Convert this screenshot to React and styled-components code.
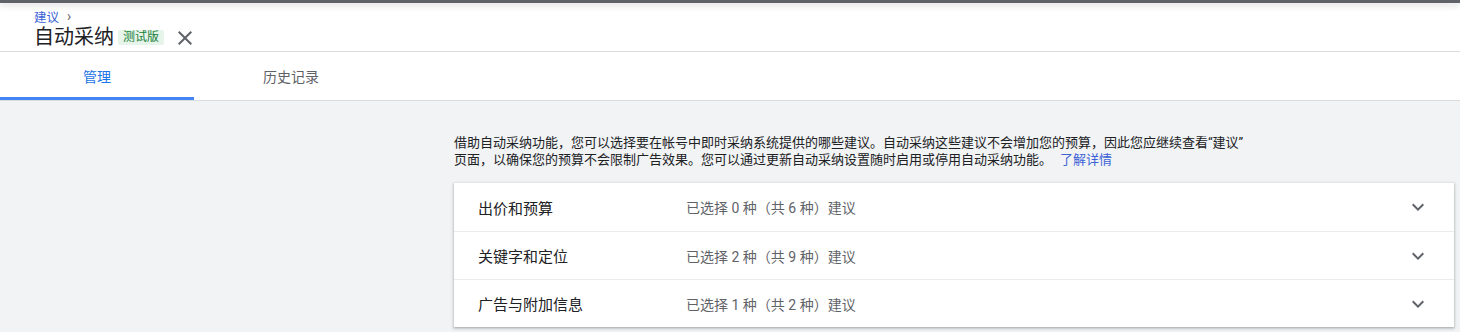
import React from "react";
import styled, { createGlobalStyle } from "styled-components";

const GlobalStyle = createGlobalStyle`
  html, body {
    margin: 0;
    padding: 0;
    background: #f1f3f4;
    font-family: Roboto, "Noto Sans CJK SC", sans-serif;
    color: #202124;
  }
`;

const groups = [
  { name: "出价和预算", selected: 0, total: 6 },
  { name: "关键字和定位", selected: 2, total: 9 },
  { name: "广告与附加信息", selected: 1, total: 2 },
];

const CloseIcon = () => (
  <svg width="24" height="24" viewBox="0 0 24 24" fill="currentColor">
    <path d="M19 6.41L17.59 5 12 10.59 6.41 5 5 6.41 10.59 12 5 17.59 6.41 19 12 13.41 17.59 19 19 17.59 13.41 12z" />
  </svg>
);

const ExpandIcon = () => (
  <svg width="24" height="24" viewBox="0 0 24 24" fill="currentColor">
    <path d="M16.59 8.59L12 13.17 7.41 8.59 6 10l6 6 6-6z" />
  </svg>
);

const App = () => {
  return (
    <Page>
      <GlobalStyle />
      <Header>
        <TopBar />
        <HeaderBody>
          <Crumb>
            <CrumbLink>建议</CrumbLink>
            <CrumbArrow>›</CrumbArrow>
          </Crumb>
          <TitleRow>
            <Title>自动采纳</Title>
            <Badge>测试版</Badge>
            <CloseButton>
              <CloseIcon />
            </CloseButton>
          </TitleRow>
        </HeaderBody>
      </Header>
      <Tabs>
        <Tab active>管理</Tab>
        <Tab>历史记录</Tab>
      </Tabs>
      <Content>
        <Side />
        <Main>
          <Intro>
            借助自动采纳功能，您可以选择要在帐号中即时采纳系统提供的哪些建议。自动采纳这些建议不会增加您的预算，因此您应继续查看“建议”
            <br />
            页面，以确保您的预算不会限制广告效果。您可以通过更新自动采纳设置随时启用或停用自动采纳功能。
            <LearnMore>了解详情</LearnMore>
          </Intro>
          <Card>
            {groups.map((g) => (
              <Row key={g.name}>
                <Label>{g.name}</Label>
                <Status>
                  已选择 {g.selected} 种（共 {g.total} 种）建议
                </Status>
                <Chevron>
                  <ExpandIcon />
                </Chevron>
              </Row>
            ))}
          </Card>
        </Main>
      </Content>
    </Page>
  );
};

export default App;

const Page = styled.div`
  width: 1460px;
  min-height: 332px;
  background: #f1f3f4;
`;

const Header = styled.header`
  background: #fff;
  border-bottom: 1px solid #dadce0;
`;

const TopBar = styled.div`
  height: 3px;
  background: #5f6368;
  box-shadow: 0 2px 6px rgba(60, 64, 67, 0.25);
`;

const HeaderBody = styled.div`
  padding: 5px 34px 0;
`;

const Crumb = styled.div`
  display: flex;
  align-items: center;
  height: 16px;
  font-size: 12.5px;
`;

const CrumbLink = styled.span`
  color: #3b62d6;
`;

const CrumbArrow = styled.span`
  color: #5f6368;
  margin-left: 8px;
  font-size: 14px;
  line-height: 16px;
`;

const TitleRow = styled.div`
  display: flex;
  align-items: center;
  height: 27px;
`;

const Title = styled.h1`
  margin: 0;
  font-size: 20px;
  font-weight: 400;
  color: #202124;
  line-height: 27px;
`;

const Badge = styled.span`
  margin-left: 4px;
  padding: 0 5px;
  height: 15px;
  line-height: 15px;
  font-size: 12px;
  color: #188038;
  background: #e6f4ea;
  border-radius: 2px;
`;

const CloseButton = styled.span`
  display: flex;
  margin-left: 9px;
  color: #5f6368;
`;

const Tabs = styled.nav`
  display: flex;
  height: 48px;
  background: #fff;
  border-bottom: 1px solid #dadce0;
`;

const Tab = styled.div`
  position: relative;
  width: 194px;
  display: flex;
  align-items: center;
  justify-content: center;
  font-size: 14px;
  color: ${(p) => (p.active ? "#1a73e8" : "#5f6368")};

  &::after {
    content: "";
    position: absolute;
    left: 0;
    right: 0;
    bottom: 0;
    height: 3px;
    background: ${(p) => (p.active ? "#4285f4" : "transparent")};
  }
`;

const Content = styled.div`
  display: grid;
  grid-template-columns: 454px 1fr;
  padding: 33px 6px 0 0;
`;

const Side = styled.div``;

const Main = styled.div`
  display: flex;
  flex-direction: column;
`;

const Intro = styled.p`
  margin: 0 0 15px;
  font-size: 13px;
  line-height: 17px;
  color: #202124;
`;

const LearnMore = styled.a`
  margin-left: 8px;
  color: #3b62d6;
  cursor: pointer;
`;

const Card = styled.div`
  background: #fff;
  box-shadow: 0 1px 2px rgba(60, 64, 67, 0.3), 0 1px 3px 1px rgba(60, 64, 67, 0.15);
`;

const Row = styled.div`
  box-sizing: border-box;
  display: flex;
  align-items: center;
  height: 48px;
  padding: 0 24px;
  border-top: 1px solid #ebebeb;

  &:first-child {
    border-top: none;
  }
`;

const Label = styled.div`
  width: 208px;
  font-size: 15px;
  color: #202124;
`;

const Status = styled.div`
  flex: 1;
  font-size: 14px;
  color: #5f6368;
`;

const Chevron = styled.span`
  display: flex;
  color: #5f6368;
`;
